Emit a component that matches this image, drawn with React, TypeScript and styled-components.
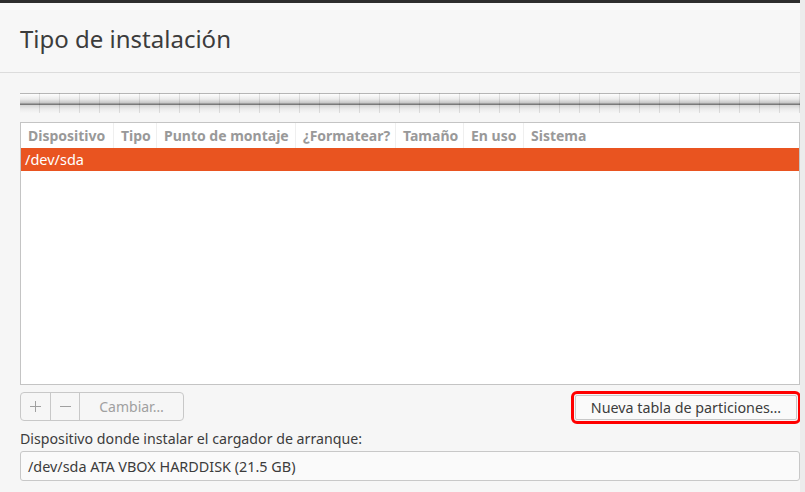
import React from 'react';
import styled, { createGlobalStyle } from 'styled-components';

const Global = createGlobalStyle`
  html, body { margin: 0; padding: 0; background: #f6f6f6; }
  body { font-family: "Noto Sans", "Open Sans", sans-serif; overflow: hidden; }
  * { box-sizing: border-box; }
`;

const Screen = styled.div`
  display: flex;
  width: 805px;
  height: 492px;
`;

const Window = styled.div`
  width: 800px;
  display: flex;
  flex-direction: column;
  background: #f6f6f6;
`;

const Edge = styled.div`
  width: 5px;
  background: #ececec;
`;

const TopStrip = styled.div`
  height: 3px;
  background: #2c2c2c;
`;

const Header = styled.header`
  height: 70px;
  border-bottom: 1px solid #dcdcdc;
  padding: 19px 0 0 20px;
  background: #f7f7f7;
`;

const Title = styled.h1`
  margin: 0;
  font-size: 24px;
  line-height: 34px;
  font-weight: 400;
  color: #3c3c3c;
`;

const Content = styled.main`
  padding: 20px 0 0 20px;
  display: flex;
  flex-direction: column;
`;

const PartitionBar = styled.div`
  height: 20px;
  background:
    repeating-linear-gradient(to right, transparent 0 19px, rgba(0, 0, 0, 0.1) 19px 20px),
    linear-gradient(to bottom, #b6b6b6 0 1px, #fdfdfd 1px, #ececec 6px, #c6c6c6 10px, #7a7a7a 11px, #7a7a7a 12px, #d4d4d4 12px, #ececec 16px, #f6f6f6 20px);
`;

const Table = styled.div`
  margin-top: 9px;
  height: 263px;
  border: 1px solid #c4c4c4;
  background: #ffffff;
`;

const HeadRow = styled.div`
  display: flex;
  height: 25px;
`;

const HeadCell = styled.div<{ $w?: number }>`
  ${(p) => (p.$w ? `width: ${p.$w}px;` : 'flex: 1;')}
  padding-left: 7px;
  border-right: ${(p) => (p.$w ? '1px solid #efefef' : 'none')};
  font-size: 14px;
  font-weight: 700;
  color: #999999;
  line-height: 25px;
  white-space: nowrap;
  overflow: hidden;
`;

const Row = styled.div<{ $selected?: boolean }>`
  height: 23px;
  padding-left: 4px;
  line-height: 23px;
  font-size: 14.5px;
  background: ${(p) => (p.$selected ? '#e95420' : 'transparent')};
  color: ${(p) => (p.$selected ? '#ffffff' : '#3c3c3c')};
`;

const Toolbar = styled.div`
  margin-top: 7px;
  height: 29px;
  display: flex;
  justify-content: space-between;
  align-items: center;
`;

const ButtonGroup = styled.div`
  display: flex;
  height: 29px;
  border: 1px solid #c8c8c8;
  border-radius: 4px;
  overflow: hidden;
`;

const GroupButton = styled.div<{ $w: number }>`
  width: ${(p) => p.$w}px;
  display: flex;
  align-items: center;
  justify-content: center;
  color: #a0a0a0;
  font-size: 14px;
  & + & { border-left: 1px solid #c8c8c8; }
`;

const NewTableButton = styled.div`
  width: 222px;
  height: 25px;
  margin-right: 3px;
  margin-top: 2px;
  border: 1px solid #c8c8c8;
  border-radius: 2px;
  background: #fafafa;
  display: flex;
  align-items: center;
  justify-content: center;
  font-size: 14.3px;
  color: #3c3c3c;
  outline: 3px solid #ff0000;
  outline-offset: 1px;
`;

const Label = styled.div`
  margin-top: 8px;
  font-size: 14.2px;
  line-height: 20px;
  color: #3c3c3c;
`;

const Combo = styled.div`
  margin-top: 2px;
  height: 30px;
  border: 1px solid #c8c8c8;
  border-radius: 3px;
  background: #fafafa;
  padding-left: 7px;
  display: flex;
  align-items: center;
  font-size: 14.4px;
  color: #3c3c3c;
`;

const Icon = styled.svg`
  display: block;
`;

export default function App() {
  return (
    <>
      <Global />
      <Screen>
        <Window>
          <TopStrip />
          <Header>
            <Title>Tipo de instalación</Title>
          </Header>
          <Content>
            <PartitionBar />
            <Table>
              <HeadRow>
                <HeadCell $w={93}>Dispositivo</HeadCell>
                <HeadCell $w={43}>Tipo</HeadCell>
                <HeadCell $w={139}>Punto de montaje</HeadCell>
                <HeadCell $w={100}>¿Formatear?</HeadCell>
                <HeadCell $w={68}>Tamaño</HeadCell>
                <HeadCell $w={60}>En uso</HeadCell>
                <HeadCell>Sistema</HeadCell>
              </HeadRow>
              <Row $selected>/dev/sda</Row>
            </Table>
            <Toolbar>
              <ButtonGroup>
                <GroupButton $w={29}>
                  <Icon width="13" height="13" viewBox="0 0 13 13">
                    <path d="M6.5 1v11M1 6.5h11" stroke="#a0a0a0" strokeWidth="1" fill="none" />
                  </Icon>
                </GroupButton>
                <GroupButton $w={29}>
                  <Icon width="13" height="13" viewBox="0 0 13 13">
                    <path d="M1 6.5h11" stroke="#a0a0a0" strokeWidth="1" fill="none" />
                  </Icon>
                </GroupButton>
                <GroupButton $w={104}>Cambiar…</GroupButton>
              </ButtonGroup>
              <NewTableButton>Nueva tabla de particiones…</NewTableButton>
            </Toolbar>
            <Label>Dispositivo donde instalar el cargador de arranque:</Label>
            <Combo>/dev/sda ATA VBOX HARDDISK (21.5 GB)</Combo>
          </Content>
        </Window>
        <Edge />
      </Screen>
    </>
  );
}
